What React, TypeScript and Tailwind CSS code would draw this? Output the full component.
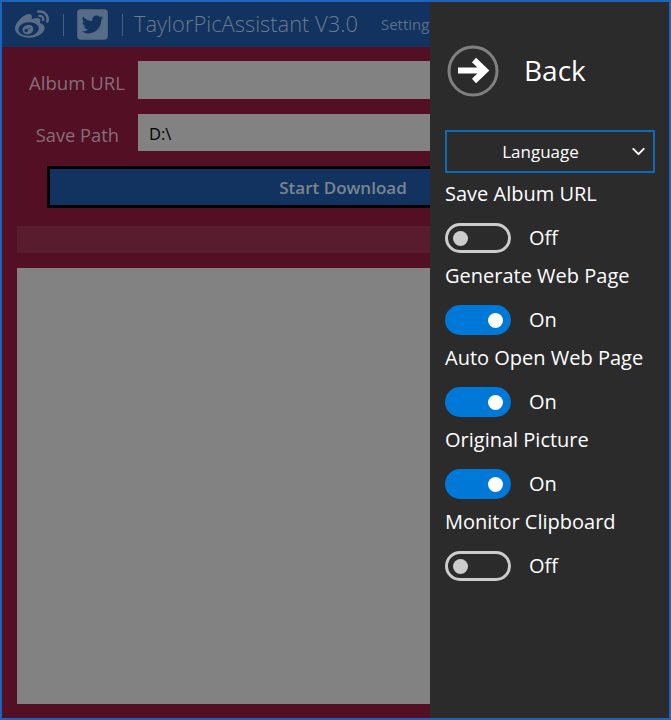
import { FaWeibo, FaTwitterSquare } from 'react-icons/fa'
import { ChevronDown } from 'lucide-react'

const SETTINGS = [
  { label: 'Save Album URL', on: false },
  { label: 'Generate Web Page', on: true },
  { label: 'Auto Open Web Page', on: true },
  { label: 'Original Picture', on: true },
  { label: 'Monitor Clipboard', on: false },
]

function Toggle({ on }: { on: boolean }) {
  return (
    <div className="flex h-[30px] items-center gap-[18px]">
      {on ? (
        <div className="flex h-[30px] w-[66px] items-center justify-end rounded-full bg-[#0078d7] pr-[8px]">
          <div className="h-[15px] w-[15px] rounded-full bg-white" />
        </div>
      ) : (
        <div className="flex h-[30px] w-[66px] items-center rounded-full border-[3px] border-[#cccccc] pl-[5px]">
          <div className="h-[15px] w-[15px] rounded-full bg-[#cccccc]" />
        </div>
      )}
      <span className="text-[20px] leading-[30px] text-white">{on ? 'On' : 'Off'}</span>
    </div>
  )
}

export default function App() {
  return (
    <div className="relative h-[720px] w-[671px] overflow-hidden border-2 border-[#1f63b8] bg-[#530f23] font-['Open_Sans','Noto_Sans',sans-serif]">
      {/* Title bar */}
      <div className="flex h-[45px] items-center bg-[#12335f] pl-[13px] text-[#6b7a8c]">
        <FaWeibo className="h-[34px] w-[34px] text-[#5b6d84]" />
        <div className="ml-[14px] h-[22px] w-[1px] bg-[#46607f]" />
        <FaTwitterSquare className="ml-[11px] h-[35px] w-[35px] text-[#566c87]" />
        <div className="ml-[12px] h-[22px] w-[1px] bg-[#46607f]" />
        <span className="ml-[11px] whitespace-nowrap text-[21.9px] font-light">TaylorPicAssistant V3.0</span>
        <span className="ml-[23px] whitespace-nowrap text-[15px] text-[#5d6f86]">Settings</span>
      </div>

      {/* Form */}
      <div className="w-[700px] pt-[14px]">
        <div className="flex items-center">
          <span className="w-[136px] pr-[13px] pt-[5px] text-right text-[18.6px] leading-[30px] text-[#857079]">Album URL</span>
          <div className="h-[38px] flex-1 border border-[#8f7d84] bg-[#828282]" />
        </div>
        <div className="mt-[15px] flex items-center">
          <span className="w-[136px] pr-[19px] pt-[5px] text-right text-[18.3px] leading-[30px] text-[#857079]">Save Path</span>
          <div className="flex h-[37px] flex-1 items-center border-t border-l border-[#8f7d84] bg-[#828282] pl-[10px] pt-[3px] text-[16.5px] text-black">
            D:\
          </div>
        </div>
        <div className="ml-[45px] mt-[15px] flex h-[42px] w-[592px] items-center justify-center border-[3px] border-black bg-[#12335f] pt-[1px] text-[17px] font-semibold text-[#7a8590]">
          Start Download
        </div>
        <div className="ml-[15px] mt-[18px] h-[27px] bg-[#591c2f]" />
        <div className="ml-[15px] mt-[15px] h-[436px] bg-[#828282]" />
      </div>

      {/* Settings panel */}
      <div className="absolute bottom-0 right-0 top-0 w-[239px] bg-[#2b2b2b] pl-[15px] text-white">
        <div className="flex items-center pt-[43px]">
          <svg viewBox="0 0 52 52" className="ml-[2px] h-[52px] w-[52px]">
            <circle cx="26" cy="26" r="24" fill="none" stroke="#808080" strokeWidth="3" />
            <path d="M11 25.5H38M27 15L38 25.5L27 36" fill="none" stroke="#fff" strokeWidth="6" />
          </svg>
          <span className="ml-[25px] -mt-[2px] text-[28px] leading-[52px]">Back</span>
        </div>
        <div className="mt-[33px] flex h-[43px] w-[210px] items-center border-2 border-[#0e6ab5] pr-[4px]">
          <span className="flex-1 pl-[6px] pt-[1px] text-center text-[17px]">Language</span>
          <ChevronDown className="h-[21px] w-[21px] text-white" strokeWidth={2.2} />
        </div>
        <div className="flex flex-col">
          {SETTINGS.map((s) => (
            <div key={s.label} className="h-[82px]">
              <div className="pt-[6px] text-[20px] leading-[30px]">{s.label}</div>
              <div className="mt-[14px]">
                <Toggle on={s.on} />
              </div>
            </div>
          ))}
        </div>
      </div>
    </div>
  )
}
